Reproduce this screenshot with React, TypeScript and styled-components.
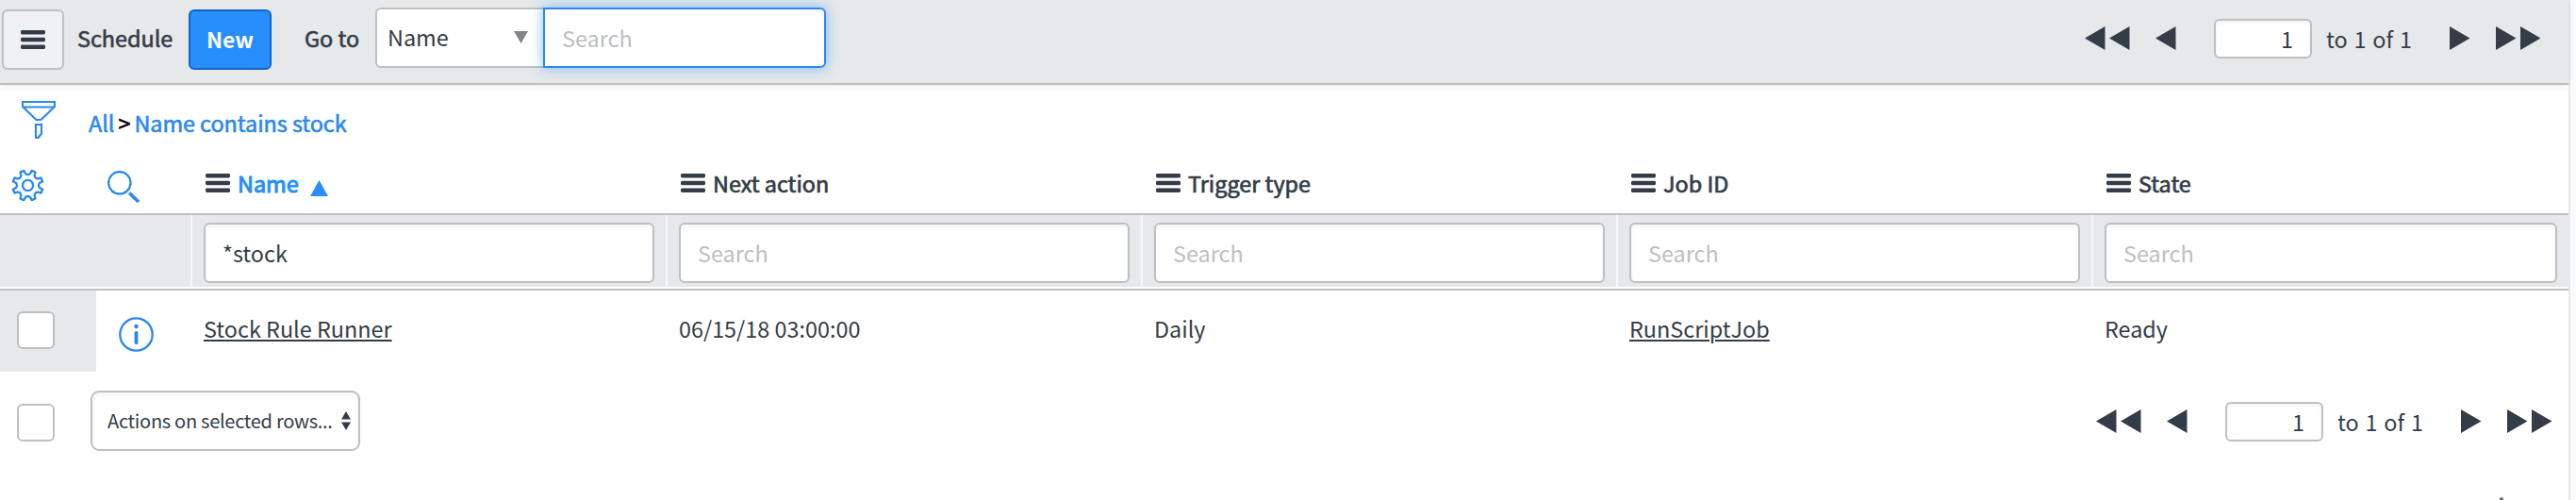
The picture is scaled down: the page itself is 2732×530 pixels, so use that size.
import React from 'react'
import styled, { createGlobalStyle, css } from 'styled-components'

const colors = {
  text: '#343d47',
  blue: '#278efc',
  link: '#2b88ee',
  line: '#bdc0c4',
  bar: '#e6e8ea',
  muted: '#bdc0c4',
}

interface Column {
  label: string
  filter: string
  value: string
  link?: boolean
  sorted?: boolean
}

const columns: Column[] = [
  { label: 'Name', filter: '*stock', value: 'Stock Rule Runner', link: true, sorted: true },
  { label: 'Next action', filter: '', value: '06/15/18 03:00:00' },
  { label: 'Trigger type', filter: '', value: 'Daily' },
  { label: 'Job ID', filter: '', value: 'RunScriptJob', link: true },
  { label: 'State', filter: '', value: 'Ready' },
]

const MenuIcon = () => (
  <svg width="26" height="20" viewBox="0 0 26 20" fill={colors.text}>
    <rect width="26" height="4.4" rx="1.4" />
    <rect y="7.8" width="26" height="4.4" rx="1.4" />
    <rect y="15.6" width="26" height="4.4" rx="1.4" />
  </svg>
)

const FunnelIcon = () => (
  <svg width="36" height="40" viewBox="0 0 36 40" fill="none" stroke={colors.link} strokeWidth="2.2">
    <path d="M1 1H35V6L20.5 20H15.5L1 6Z" />
    <path d="M1 6.5H35" />
    <path d="M15 25H21V34.5L17.5 39H15Z" />
  </svg>
)

const gearPath = () => {
  const points: string[] = []
  for (let i = 0; i < 8; i++) {
    const tooth = [
      [-10.5, 13.2],
      [-7.5, 16.2],
      [7.5, 16.2],
      [10.5, 13.2],
    ]
    tooth.forEach(([offset, radius]) => {
      const angle = ((i * 45 + 22.5 + offset) * Math.PI) / 180
      points.push(`${(17.5 + radius * Math.cos(angle)).toFixed(2)} ${(17.5 + radius * Math.sin(angle)).toFixed(2)}`)
    })
  }
  return points
    .map((point, i) => (i === 0 ? `M${point}` : i % 4 === 0 ? `A3.4 3.4 0 0 0 ${point}` : `L${point}`))
    .join('')
    .concat(`A3.4 3.4 0 0 0 ${points[0]}Z`)
}

const GearIcon = () => (
  <svg width="35" height="35" viewBox="0 0 35 35" fill="none" stroke={colors.link} strokeWidth="2.3" strokeLinejoin="round">
    <path d={gearPath()} />
    <circle cx="17.5" cy="17.5" r="5.6" />
  </svg>
)

const SearchIcon = () => (
  <svg width="35" height="35" viewBox="0 0 35 35" fill="none" stroke={colors.link}>
    <circle cx="12.8" cy="12.8" r="11.7" strokeWidth="2.3" />
    <path d="M23.2 23.6L33 33" strokeWidth="3.6" />
  </svg>
)

const InfoIcon = () => (
  <svg width="37" height="37" viewBox="0 0 37 37">
    <circle cx="18.5" cy="18.5" r="17.2" fill="none" stroke={colors.link} strokeWidth="2.3" />
    <circle cx="18.5" cy="10" r="2.2" fill={colors.link} />
    <rect x="16.6" y="15" width="3.8" height="14" rx="1.6" fill={colors.link} />
  </svg>
)

const Arrow: React.FC<{ right?: boolean; double?: boolean }> = ({ right, double }) => {
  const shape = right ? 'M0 0L21.5 12.5L0 25Z' : 'M21.5 0L0 12.5L21.5 25Z'
  return (
    <svg width={double ? 48 : 22} height="25" fill={colors.text}>
      <path d={shape} />
      {double && <path d={shape} transform="translate(26 0)" />}
    </svg>
  )
}

const Pager = () => (
  <StyledPager>
    <Arrow double />
    <Arrow />
    <PageInput defaultValue="1" />
    <PageTotal>to 1 of 1</PageTotal>
    <Arrow right />
    <Arrow right double />
  </StyledPager>
)

const App: React.FC = () => (
  <Page>
    <GlobalStyle />
    <List>
      <Toolbar>
        <MenuButton>
          <MenuIcon />
        </MenuButton>
        <Title>Schedule</Title>
        <NewButton>New</NewButton>
        <GoTo>Go to</GoTo>
        <FieldSelect>
          Name
          <svg width="15" height="13" fill="#81868c">
            <path d="M0 0H15L7.5 13Z" />
          </svg>
        </FieldSelect>
        <GoToInput placeholder="Search" />
        <Pager />
      </Toolbar>

      <Breadcrumb>
        <FunnelIcon />
        <p>
          <a>All</a>
          <b>&gt;</b>
          <a>Name contains stock</a>
        </p>
      </Breadcrumb>

      <HeaderRow>
        <HeaderTools>
          <GearIcon />
          <SearchIcon />
        </HeaderTools>
        {columns.map(column => (
          <HeaderCell key={column.label} $sorted={column.sorted}>
            <MenuIcon />
            <span>{column.label}</span>
            {column.sorted && (
              <svg width="19" height="17" fill={colors.blue}>
                <path d="M9.5 0L19 17H0Z" />
              </svg>
            )}
          </HeaderCell>
        ))}
      </HeaderRow>

      <FilterRow>
        <div />
        {columns.map(column => (
          <FilterCell key={column.label}>
            <FilterInput placeholder="Search" defaultValue={column.filter} />
          </FilterCell>
        ))}
      </FilterRow>

      <DataRow>
        <RowTools>
          <CheckCell>
            <Checkbox />
          </CheckCell>
          <InfoIcon />
        </RowTools>
        {columns.map(column => (
          <DataCell key={column.label}>{column.link ? <a>{column.value}</a> : column.value}</DataCell>
        ))}
      </DataRow>

      <Footer>
        <Checkbox />
        <ActionSelect>
          Actions on selected rows...
          <svg width="10" height="20" fill={colors.text}>
            <path d="M5 0L10 8.5H0ZM0 11.5H10L5 20Z" />
          </svg>
        </ActionSelect>
        <Pager />
      </Footer>
      <Timing />
    </List>
  </Page>
)

export default App

const GlobalStyle = createGlobalStyle`
  * {
    box-sizing: border-box;
  }

  body {
    margin: 0;
    background: #fafafa;
  }

  body, input, button {
    font-family: 'Noto Sans CJK SC', 'Noto Sans', sans-serif;
    font-size: 23.4px;
    line-height: 34px;
    color: ${colors.text};
  }

  svg {
    display: block;
    flex: none;
  }

  p {
    margin: 0;
  }
`

/* semi-bold look, between the regular and bold cuts */
const medium = css`
  font-weight: 400;
  -webkit-text-stroke: 0.6px currentColor;
`

const Page = styled.div`
  width: 2732px;
  height: 530px;
  overflow: hidden;
  white-space: nowrap;
`

const List = styled.div`
  width: 2726px;
  height: 530px;
  background: #fff;
  border-right: 2px solid #e6e8ea;
`

const Toolbar = styled.div`
  display: flex;
  align-items: flex-start;
  height: 90px;
  padding: 8px 29px 0 2px;
  background: ${colors.bar};
  border-bottom: 2px solid ${colors.line};
  box-shadow: 0 2px 6px rgba(0, 0, 0, 0.08);
`

const Button = styled.button`
  display: flex;
  align-items: center;
  justify-content: center;
  height: 64px;
  margin-top: 2px;
  padding: 0;
  border-radius: 6px;
`

const MenuButton = styled(Button)`
  width: 66px;
  background: #f0f1f3;
  border: 2px solid ${colors.line};
`

const Title = styled.span`
  width: 118px;
  margin: 15px 0 0 14px;
  ${medium}
`

const NewButton = styled(Button)`
  width: 88px;
  padding-bottom: 1px;
  background: ${colors.blue};
  border: 2px solid #1065cc;
  color: #fff;
  font-size: 22.8px;
  font-weight: 700;
`

const GoTo = styled.span`
  width: 75px;
  margin: 15px 0 0 35px;
  ${medium}
`

const FieldSelect = styled.div`
  display: flex;
  align-items: center;
  justify-content: space-between;
  width: 178px;
  height: 64px;
  padding: 0 16px 3px 11px;
  background: #fff;
  border: 2px solid ${colors.line};
  border-right: 0;
  border-radius: 6px 0 0 6px;

  svg {
    margin-top: 2px;
  }
`

const Input = styled.input`
  height: 64px;
  padding: 0 18px;
  background: #fff;
  border: 2px solid ${colors.line};
  border-radius: 6px;
  box-shadow: inset 0 2px 4px rgba(0, 0, 0, 0.06);
  outline: 0;

  &::placeholder {
    color: ${colors.muted};
    opacity: 1;
  }
`

const GoToInput = styled(Input)`
  width: 300px;
  border-color: ${colors.link};
  border-radius: 0 6px 6px 0;
  box-shadow: 0 0 14px rgba(39, 142, 252, 0.55);
`

const StyledPager = styled.div`
  display: flex;
  align-items: center;
  height: 42px;
  margin: 12px 0 0 auto;

  svg {
    margin-bottom: 1px;
  }

  svg:nth-child(2) {
    margin: 0 40px 1px 27px;
  }

  svg:last-child {
    margin-left: 27px;
  }
`

const PageInput = styled(Input)`
  width: 104px;
  height: 42px;
  padding-bottom: 1px;
  text-align: right;
`

const PageTotal = styled.span`
  width: 131px;
  margin: 0 0 1px 15px;
  word-spacing: 1.6px;
`

const Breadcrumb = styled.div`
  display: flex;
  height: 83px;
  padding: 17px 0 0 23px;

  p {
    margin: 6px 0 0 35px;
    ${medium}
  }

  a {
    color: ${colors.link};
    letter-spacing: -0.04px;
  }

  b {
    margin: 0 4px;
    color: #000;
    font-weight: 400;
  }
`

const Row = styled.div`
  display: grid;
  grid-template-columns: 202px repeat(4, 504px) 1fr;
`

const HeaderRow = styled(Row)`
  height: 55px;
  border-bottom: 2px solid ${colors.line};
`

const HeaderTools = styled.div`
  display: flex;
  gap: 67px;
  padding: 6px 0 0 12px;

  svg + svg {
    margin-top: 2px;
  }
`

const HeaderCell = styled.div<{ $sorted?: boolean }>`
  display: flex;
  align-items: flex-start;
  padding: 11px 0 0 16px;
  color: ${props => (props.$sorted ? colors.blue : colors.text)};
  ${medium}

  span {
    margin: -7px 12px 0 8px;
    -webkit-text-stroke-width: ${props => (props.$sorted ? '1px' : '0.7px')};
  }

  svg:last-child {
    margin-top: 7px;
  }

  svg:first-child {
    margin-top: 0;
  }
`

const FilterRow = styled(Row)`
  height: 80px;
  background: ${colors.bar};
  border-bottom: 2px solid ${colors.line};
  box-shadow: inset 0 -2px #fff;
`

const FilterCell = styled.div`
  padding: 8px 12px 0;
  border-left: 2px solid #f6f7f8;
`

const FilterInput = styled(Input)`
  display: block;
  width: 100%;
`

const DataRow = styled(Row)`
  height: 86px;
`

const RowTools = styled.div`
  display: flex;
  align-items: center;
  gap: 24px;

  > svg {
    margin-top: 7px;
  }
`

const CheckCell = styled.div`
  width: 102px;
  height: 86px;
  padding: 22px 0 0 18px;
  background: ${colors.bar};
`

const Checkbox = styled.div`
  width: 40px;
  height: 40px;
  background: #fff;
  border: 2px solid ${colors.line};
  border-radius: 6px;
`

const DataCell = styled.div`
  padding: 23px 0 0 14px;

  a {
    text-decoration: underline;
    text-decoration-thickness: 2px;
    text-underline-offset: 2px;
  }
`

const Footer = styled.div`
  display: flex;
  padding: 20px 17px 0 18px;

  > ${Checkbox} {
    margin-top: 14px;
  }
`

const ActionSelect = styled.div`
  display: flex;
  align-items: center;
  justify-content: space-between;
  width: 286px;
  height: 64px;
  margin-left: 38px;
  padding: 0 8px 0 16px;
  border: 2px solid ${colors.line};
  border-radius: 9px;
  box-shadow: inset 0 2px 4px rgba(0, 0, 0, 0.06);
  font-size: 20px;
  letter-spacing: -0.28px;
`

const Timing = styled.div`
  width: 4px;
  height: 3px;
  margin: 49px 0 0 2651px;
  background: #6b7078;
  border-radius: 2px 2px 0 0;
`
